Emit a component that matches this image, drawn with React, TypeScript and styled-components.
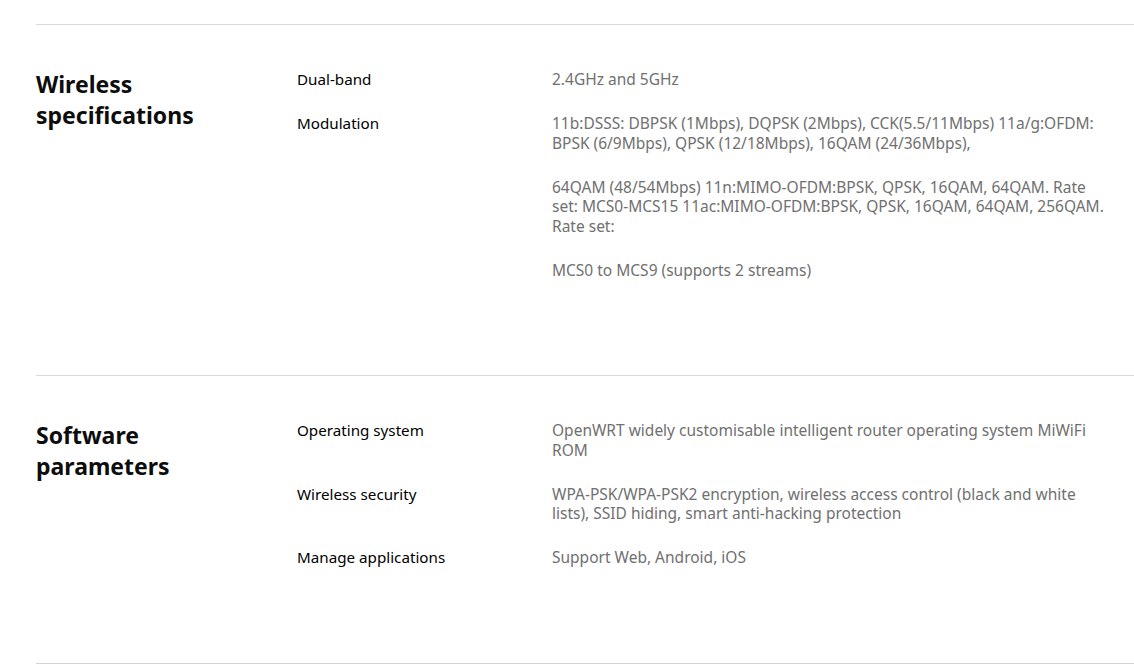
import React from "react";
import styled, { createGlobalStyle } from "styled-components";

const GlobalStyle = createGlobalStyle`
  html, body { margin: 0; padding: 0; background: #ffffff; }
  body { font-family: "Noto Sans", "Open Sans", sans-serif; }
`;

const Page = styled.main`
  padding-top: 24px;
  width: 1134px;
`;

const Section = styled.section`
  margin-left: 36px;
  border-top: 1px solid #dadada;
  padding: 45px 0 95px;
  display: grid;
  grid-template-columns: 261px 255px 558px;
  align-items: start;
  &:last-child {
    border-bottom: 1px solid #d4d4d4;
  }
`;

const Title = styled.h2`
  margin: -1px 0 0;
  font-size: 23px;
  line-height: 31px;
  font-weight: 700;
  color: #0d0d0d;
`;

const Specs = styled.dl`
  margin: 0;
  grid-column: 2 / 4;
  display: grid;
  grid-template-columns: 255px 558px;
  row-gap: 24.5px;
`;

const Label = styled.dt`
  margin: 0;
  font-size: 15.2px;
  line-height: 19.5px;
  color: #000000;
`;

const Value = styled.dd`
  margin: 0;
  display: flex;
  flex-direction: column;
  gap: 24.5px;
`;

const Para = styled.p`
  margin: 0;
  font-size: 15.5px;
  line-height: 19.5px;
  color: #707070;
`;

type Spec = { label: string; value: string[] };

const sections: { title: string[]; specs: Spec[] }[] = [
  {
    title: ["Wireless", "specifications"],
    specs: [
      { label: "Dual-band", value: ["2.4GHz and 5GHz"] },
      {
        label: "Modulation",
        value: [
          "11b:DSSS: DBPSK (1Mbps), DQPSK (2Mbps), CCK(5.5/11Mbps) 11a/g:OFDM: BPSK (6/9Mbps), QPSK (12/18Mbps), 16QAM (24/36Mbps),",
          "64QAM (48/54Mbps) 11n:MIMO-OFDM:BPSK, QPSK, 16QAM, 64QAM. Rate set: MCS0-MCS15 11ac:MIMO-OFDM:BPSK, QPSK, 16QAM, 64QAM, 256QAM. Rate set:",
          "MCS0 to MCS9 (supports 2 streams)",
        ],
      },
    ],
  },
  {
    title: ["Software", "parameters"],
    specs: [
      {
        label: "Operating system",
        value: ["OpenWRT widely customisable intelligent router operating system MiWiFi ROM"],
      },
      {
        label: "Wireless security",
        value: [
          "WPA-PSK/WPA-PSK2 encryption, wireless access control (black and white lists), SSID hiding, smart anti-hacking protection",
        ],
      },
      { label: "Manage applications", value: ["Support Web, Android, iOS"] },
    ],
  },
];

export default function App() {
  return (
    <>
      <GlobalStyle />
      <Page>
        {sections.map((s) => (
          <Section key={s.title.join(" ")}>
            <Title>
              {s.title[0]}
              <br />
              {s.title[1]}
            </Title>
            <Specs>
              {s.specs.map((sp) => (
                <React.Fragment key={sp.label}>
                  <Label>{sp.label}</Label>
                  <Value>
                    {sp.value.map((v, i) => (
                      <Para key={i}>{v}</Para>
                    ))}
                  </Value>
                </React.Fragment>
              ))}
            </Specs>
          </Section>
        ))}
      </Page>
    </>
  );
}
